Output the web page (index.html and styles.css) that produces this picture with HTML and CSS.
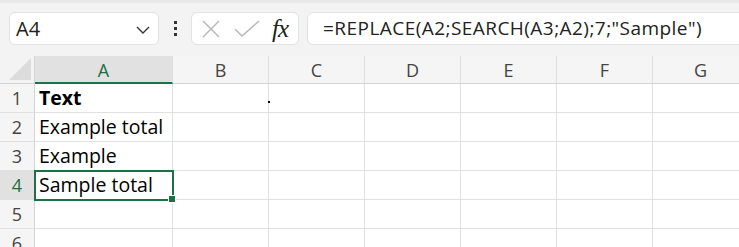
FILE: index.html
```html
<!DOCTYPE html>
<html>
<head>
<meta charset="utf-8">
<link rel="stylesheet" href="styles.css">
</head>
<body>
<div class="toolbar">
  <div class="namebox">
    <span class="name">A4</span>
    <svg class="chev" width="14" height="8" viewBox="0 0 14 8"><path d="M1 1 L7 7 L13 1" fill="none" stroke="#333" stroke-width="1.4"/></svg>
  </div>
  <div class="dots"><i></i><i></i><i></i></div>
  <div class="fxbox">
    <svg class="ic" width="20" height="20" viewBox="0 0 20 20"><path d="M2 2 L18 18 M18 2 L2 18" stroke="#b5b5b5" stroke-width="1.4" fill="none"/></svg>
    <svg class="ic" width="26" height="18" viewBox="0 0 26 18"><path d="M1 9 L8 16 L25 1" stroke="#b5b5b5" stroke-width="1.4" fill="none"/></svg>
    <span class="fx">fx</span>
  </div>
  <div class="formula">=REPLACE(A2;SEARCH(A3;A2);7;"Sample")</div>
</div>
<div class="sheet">
  <div class="corner"><span class="tri"></span></div>
  <div class="ch sel">A</div><div class="ch">B</div><div class="ch">C</div><div class="ch">D</div><div class="ch">E</div><div class="ch">F</div><div class="ch">G</div>

  <div class="rh">1</div><div class="c bold">Text</div><div class="c dotcell"><span class="dot"></span></div><div class="c"></div><div class="c"></div><div class="c"></div><div class="c"></div><div class="c"></div>
  <div class="rh">2</div><div class="c">Example total</div><div class="c"></div><div class="c"></div><div class="c"></div><div class="c"></div><div class="c"></div><div class="c"></div>
  <div class="rh">3</div><div class="c">Example</div><div class="c"></div><div class="c"></div><div class="c"></div><div class="c"></div><div class="c"></div><div class="c"></div>
  <div class="rh rsel">4</div><div class="c active">Sample total<span class="handle"></span></div><div class="c"></div><div class="c"></div><div class="c"></div><div class="c"></div><div class="c"></div><div class="c"></div>
  <div class="rh">5</div><div class="c"></div><div class="c"></div><div class="c"></div><div class="c"></div><div class="c"></div><div class="c"></div><div class="c"></div>
  <div class="rh">6</div><div class="c"></div><div class="c"></div><div class="c"></div><div class="c"></div><div class="c"></div><div class="c"></div><div class="c"></div>
</div>
</body>
</html>
```
FILE: styles.css
```css
html, body {
  margin: 0;
  padding: 0;
  background: #ffffff;
  overflow: hidden;
  width: 739px;
  height: 247px;
  font-family: "Open Sans", "Noto Sans", sans-serif;
}
.toolbar {
  background: #f3f3f3;
  border-top: 3px solid #e8e8e8;
  display: flex;
  align-items: flex-start;
  padding: 9px 0 0 9px;
  box-sizing: border-box;
  height: 56px;
}
.namebox {
  width: 150px;
  height: 33px;
  box-sizing: border-box;
  background: #fff;
  border: 1px solid #e2e2e2;
  border-radius: 6px;
  display: flex;
  align-items: center;
  justify-content: space-between;
  padding: 0 8px 0 6px;
}
.name {
  font-size: 20px;
  color: #222;
}
.chev { margin-top: 2px; }
.dots {
  width: 32px;
  height: 33px;
  display: flex;
  flex-direction: column;
  align-items: center;
  justify-content: center;
  gap: 3px;
}
.dots i {
  display: block;
  width: 3px;
  height: 3px;
  background: #333;
}
.fxbox {
  width: 108px;
  height: 33px;
  box-sizing: border-box;
  background: #fff;
  border: 1px solid #e2e2e2;
  border-radius: 6px;
  display: flex;
  align-items: center;
  padding: 0 0 0 9px;
  gap: 13px;
}
.ic { display: block; }
.fx {
  font-family: "Liberation Serif", serif;
  font-style: italic;
  font-size: 25px;
  line-height: 25px;
  color: #222;
  margin-left: -1px;
  letter-spacing: -1px;
}
.formula {
  flex: 1;
  height: 33px;
  margin-left: 8px;
  margin-right: -10px;
  box-sizing: border-box;
  background: #fff;
  border: 1px solid #e2e2e2;
  border-radius: 6px;
  padding-left: 15px;
  font-size: 19px;
  letter-spacing: 0.45px;
  line-height: 31px;
  color: #222;
  white-space: nowrap;
}
.sheet {
  display: grid;
  grid-template-columns: 35px 138px 96px 96px 96px 96px 96px 96px;
  grid-template-rows: 28px 29px 29px 29px 29px 29px 29px;
  background: #fff;
}
.corner {
  background: #f3f3f3;
  border-right: 1px solid #d4d4d4;
  border-bottom: 1px solid #d4d4d4;
  box-sizing: border-box;
  position: relative;
}
.tri {
  position: absolute;
  right: 3px;
  bottom: 3px;
  width: 0;
  height: 0;
  border-left: 22px solid transparent;
  border-bottom: 22px solid #dcdcdc;
}
.ch {
  background: #f5f5f5;
  border-right: 1px solid #e0e0e0;
  border-bottom: 1px solid #d4d4d4;
  box-sizing: border-box;
  text-align: center;
  font-size: 18px;
  line-height: 28px;
  color: #444;
}
.ch.sel {
  background: #e1e1e1;
  color: #1e6e42;
  border-bottom: 2px solid #1e7145;
}
.rh {
  background: #f5f5f5;
  border-right: 1px solid #d4d4d4;
  border-bottom: 1px solid #e0e0e0;
  box-sizing: border-box;
  text-align: center;
  font-size: 18px;
  line-height: 28px;
  color: #444;
}
.rh.rsel {
  background: #e1e1e1;
  color: #1e6e42;
}
.c {
  border-right: 1px solid #e1e1e1;
  border-bottom: 1px solid #e1e1e1;
  box-sizing: border-box;
  font-size: 19.5px;
  line-height: 28px;
  padding-left: 4px;
  color: #000;
  white-space: nowrap;
  position: relative;
}
.bold { font-weight: bold; }
.active {
  outline: 2px solid #1e7145;
  outline-offset: -1px;
  z-index: 2;
}
.handle {
  position: absolute;
  right: -4px;
  bottom: -4px;
  width: 6px;
  height: 6px;
  background: #1e7145;
  border: 1px solid #fff;
}
.dot {
  position: absolute;
  right: -2px;
  top: 17px;
  width: 2px;
  height: 2px;
  background: #000;
  z-index: 3;
}
```
